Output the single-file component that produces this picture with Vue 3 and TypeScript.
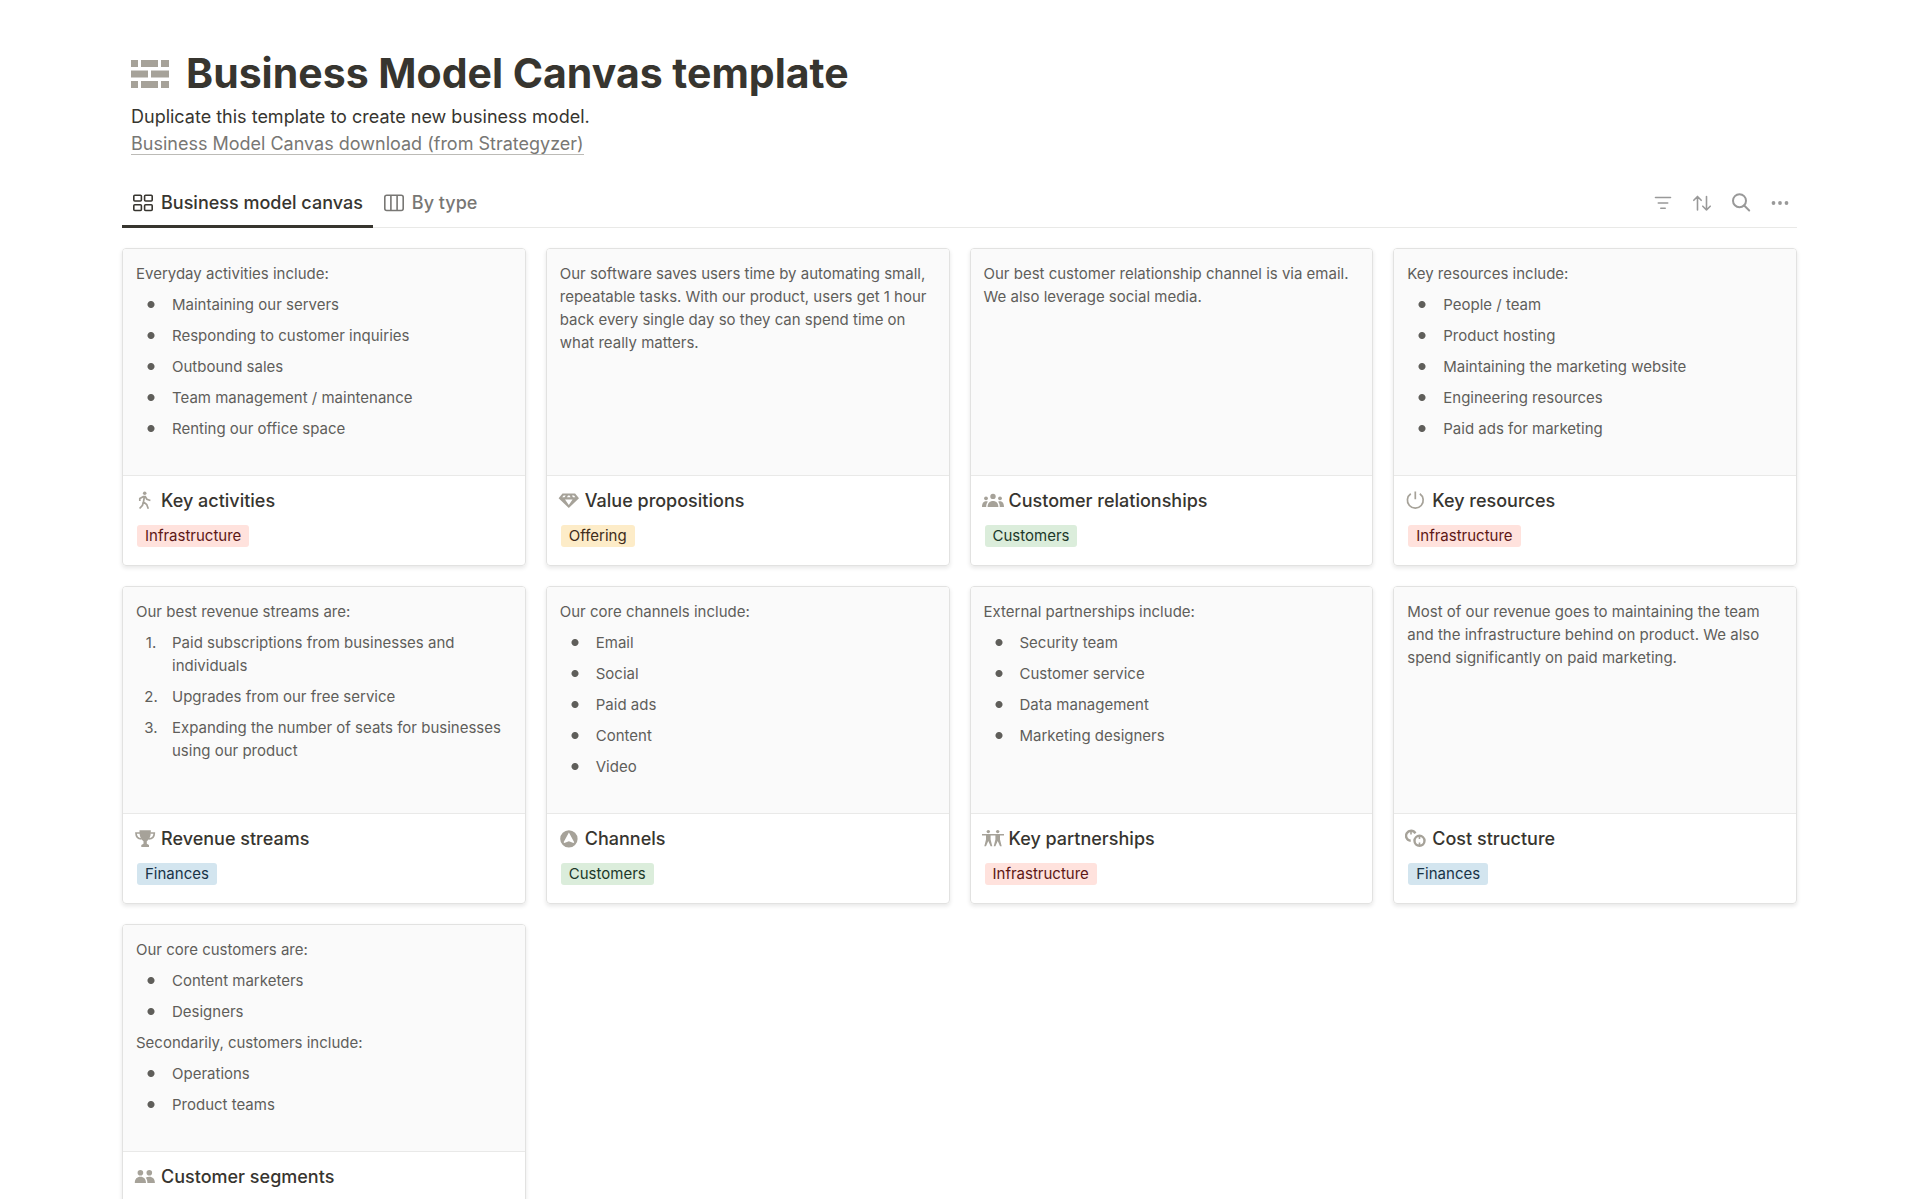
<script setup lang="ts">
import { ref } from 'vue'

type Tone = 'red' | 'yellow' | 'green' | 'blue'
type IconName =
  | 'walk' | 'gem' | 'group' | 'power' | 'trophy' | 'compass' | 'partners' | 'coins' | 'people'

interface Block {
  kind: 'text' | 'bullets' | 'numbers'
  text?: string
  items?: string[]
}

interface Card {
  title: string
  icon: IconName
  tag: string
  tone: Tone
  blocks: Block[]
}

const activeTab = ref('canvas')

const cards: Card[] = [
  {
    title: 'Key activities', icon: 'walk', tag: 'Infrastructure', tone: 'red',
    blocks: [
      { kind: 'text', text: 'Everyday activities include:' },
      { kind: 'bullets', items: ['Maintaining our servers', 'Responding to customer inquiries', 'Outbound sales', 'Team management / maintenance', 'Renting our office space'] },
    ],
  },
  {
    title: 'Value propositions', icon: 'gem', tag: 'Offering', tone: 'yellow',
    blocks: [
      { kind: 'text', text: 'Our software saves users time by automating small, repeatable tasks. With our product, users get 1 hour back every single day so they can spend time on what really matters.' },
    ],
  },
  {
    title: 'Customer relationships', icon: 'group', tag: 'Customers', tone: 'green',
    blocks: [
      { kind: 'text', text: 'Our best customer relationship channel is via email. We also leverage social media.' },
    ],
  },
  {
    title: 'Key resources', icon: 'power', tag: 'Infrastructure', tone: 'red',
    blocks: [
      { kind: 'text', text: 'Key resources include:' },
      { kind: 'bullets', items: ['People / team', 'Product hosting', 'Maintaining the marketing website', 'Engineering resources', 'Paid ads for marketing'] },
    ],
  },
  {
    title: 'Revenue streams', icon: 'trophy', tag: 'Finances', tone: 'blue',
    blocks: [
      { kind: 'text', text: 'Our best revenue streams are:' },
      { kind: 'numbers', items: ['Paid subscriptions from businesses and individuals', 'Upgrades from our free service', 'Expanding the number of seats for businesses using our product'] },
    ],
  },
  {
    title: 'Channels', icon: 'compass', tag: 'Customers', tone: 'green',
    blocks: [
      { kind: 'text', text: 'Our core channels include:' },
      { kind: 'bullets', items: ['Email', 'Social', 'Paid ads', 'Content', 'Video'] },
    ],
  },
  {
    title: 'Key partnerships', icon: 'partners', tag: 'Infrastructure', tone: 'red',
    blocks: [
      { kind: 'text', text: 'External partnerships include:' },
      { kind: 'bullets', items: ['Security team', 'Customer service', 'Data management', 'Marketing designers'] },
    ],
  },
  {
    title: 'Cost structure', icon: 'coins', tag: 'Finances', tone: 'blue',
    blocks: [
      { kind: 'text', text: 'Most of our revenue goes to maintaining the team and the infrastructure behind on product. We also spend significantly on paid marketing.' },
    ],
  },
  {
    title: 'Customer segments', icon: 'people', tag: 'Customers', tone: 'green',
    blocks: [
      { kind: 'text', text: 'Our core customers are:' },
      { kind: 'bullets', items: ['Content marketers', 'Designers'] },
      { kind: 'text', text: 'Secondarily, customers include:' },
      { kind: 'bullets', items: ['Operations', 'Product teams'] },
    ],
  },
]
</script>

<template>
  <main class="page">
    <header class="intro">
      <div class="heading">
        <svg class="brick" viewBox="0 0 38 28" aria-hidden="true">
          <path d="M0 0h7v7H0zM10 0h17v7H10zM30 0h8v7h-8zM0 10.500h17v7H0zM20 10.500h18v7H20zM0 21h7v7H0zM10 21h17v7H10zM30 21h8v7h-8z" />
        </svg>
        <h1>Business Model Canvas template</h1>
      </div>
      <p>Duplicate this template to create new business model.</p>
      <p><a href="#download">Business Model Canvas download (from Strategyzer)</a></p>
    </header>

    <nav class="bar">
      <div class="tabs">
        <button type="button" class="tab" :class="{ active: activeTab === 'canvas' }" @click="activeTab = 'canvas'">
          <svg viewBox="0 0 20 18" aria-hidden="true">
            <rect x="0.800" y="1.300" width="7.600" height="5.700" rx="1" /><rect x="11.600" y="1.300" width="7.600" height="5.700" rx="1" />
            <rect x="0.800" y="10.800" width="7.600" height="5.700" rx="1" /><rect x="11.600" y="10.800" width="7.600" height="5.700" rx="1" />
          </svg>
          <span>Business model canvas</span>
        </button>
        <button type="button" class="tab" :class="{ active: activeTab === 'type' }" @click="activeTab = 'type'">
          <svg viewBox="0 0 20 18" aria-hidden="true">
            <rect x="0.800" y="1.300" width="18.400" height="15.200" rx="2" /><path d="M6.900 1.300v15.200M13.100 1.300v15.200" />
          </svg>
          <span>By type</span>
        </button>
      </div>
      <div class="tools">
        <button type="button" aria-label="Filter">
          <svg viewBox="0 0 20 20"><path d="M2.500 4.500h15M5.300 10h9.400M7.800 15.200h4.400" /></svg>
        </button>
        <button type="button" aria-label="Sort">
          <svg viewBox="0 0 20 20"><path d="M5.500 17V3.500M1.800 7.300l3.700-3.800 3.700 3.800M14.500 3.500V17M10.800 13.200l3.700 3.800 3.700-3.800" /></svg>
        </button>
        <button type="button" aria-label="Search">
          <svg viewBox="0 0 20 20" class="thick"><circle cx="8.500" cy="7.700" r="6.500" /><path d="m13.200 12.500 5 5" /></svg>
        </button>
        <button type="button" aria-label="More options">
          <svg viewBox="0 0 20 20" class="dots"><circle cx="3.500" cy="10" r="1.900" /><circle cx="10" cy="10" r="1.900" /><circle cx="16.500" cy="10" r="1.900" /></svg>
        </button>
      </div>
    </nav>

    <section class="gallery">
      <article v-for="card in cards" :key="card.title" class="card">
        <div class="cover">
          <template v-for="(block, index) in card.blocks" :key="index">
            <p v-if="block.kind === 'text'">{{ block.text }}</p>
            <ul v-else-if="block.kind === 'bullets'">
              <li v-for="item in block.items" :key="item"><span>{{ item }}</span></li>
            </ul>
            <ol v-else>
              <li v-for="item in block.items" :key="item"><span>{{ item }}</span></li>
            </ol>
          </template>
        </div>
        <div class="info">
          <h2>
            <svg viewBox="0 0 22 22" aria-hidden="true">
              <template v-if="card.icon === 'walk'">
                <circle cx="10.700" cy="3.300" r="1.800" />
                <path class="line" d="M5.800 11V8.600L9.300 6.700h2l1.600 2.600 3.500 1.200M10.300 7 9.500 12l3.200 2.500 1.600 4.300M9.300 12.300l-.8 3L5.600 18.500" />
              </template>
              <template v-else-if="card.icon === 'gem'">
                <path fill-rule="evenodd" d="M4.500 3.500h12.600L21 8.300 10.800 18 .6 8.300zM5.600 5.400 4.200 7.300h2.400L7.700 5.400zM10 5.400 9 7.300h3.600l-1-1.900zM13.900 5.400 15 7.300h2.400L16 5.400zM7 9.500l3.800 5.500 3.800-5.500z" />
              </template>
              <template v-else-if="card.icon === 'group'">
                <circle cx="11" cy="6.400" r="2.700" /><circle cx="4" cy="8.300" r="1.900" /><circle cx="18" cy="8.300" r="1.900" />
                <path d="M5.600 17c0-4 2.300-6 5.400-6s5.400 2 5.400 6zM0 17c0-3.500 1.300-5.800 4-5.800.7 0 1.300.1 1.900.5C4.700 13 4.200 14.800 4.200 17zM22 17c0-3.500-1.300-5.800-4-5.800-.7 0-1.300.1-1.900.5 1.200 1.300 1.700 3.100 1.700 5.300z" />
              </template>
              <template v-else-if="card.icon === 'power'">
                <path class="line" d="M10.300 1.500v7.700M5.800 3.800a7.900 7.900 0 1 0 9 0" />
              </template>
              <template v-else-if="card.icon === 'trophy'">
                <path d="M5.500 2.300h11.300v2c0 4.600-1.600 7.400-4 8.900v2.600l2.200 1.200v1.900H7.300V17l2.200-1.200v-2.600c-2.400-1.500-4-4.300-4-8.900z" />
                <path class="line" d="M6 5H2C2 8.500 4 10.800 7.500 11M16.300 5h4c0 3.500-2 5.800-5.500 6" />
              </template>
              <template v-else-if="card.icon === 'compass'">
                <path fill-rule="evenodd" d="M10.900 2.200a8.700 8.700 0 1 0 0 17.400 8.700 8.700 0 0 0 0-17.400zM10.900 4.500 5.600 14.300l.7.800 4.600-1.800 4.600 1.800.7-.8z" />
              </template>
              <template v-else-if="card.icon === 'partners'">
                <circle cx="6.300" cy="3.600" r="1.700" /><circle cx="15.700" cy="3.600" r="1.700" />
                <path d="M0 6h22v1.500h-4v4l1.700 6.700h-1.700l-2.300-5.300-2.300 5.300h-1.700l1.700-6.700v-4H8.600v4l1.700 6.700H8.600l-2.300-5.300L4 18.200H2.300L4 11.500v-4H0z" />
              </template>
              <template v-else-if="card.icon === 'coins'">
                <circle class="ring" cx="14.500" cy="12.800" r="5" />
                <path class="ring" d="M10.400 5.300a5 5 0 1 0-4.700 7.500" />
                <path d="M5.200 2h1.600v4.500H5.200zM13.700 8h1.600v3h-1.600zM13.700 14.600h1.600v3h-1.600z" />
              </template>
              <template v-else>
                <circle cx="6.400" cy="6.700" r="2.800" /><circle cx="15.300" cy="6.700" r="2.800" />
                <path d="M.8 17c0-4 2.200-6.200 5.600-6.200S12 13 12 17zM13.400 17c0-2.200-.5-4-1.700-5.300 1-.6 2.200-.9 3.600-.9 3.400 0 5.600 2.200 5.600 6.200z" />
              </template>
            </svg>
            <span>{{ card.title }}</span>
          </h2>
          <span class="tag" :class="card.tone">{{ card.tag }}</span>
        </div>
      </article>
    </section>
  </main>
</template>

<style>
body {
  margin: 0;
  background: #fff;
}
</style>

<style scoped>
.page {
  box-sizing: border-box;
  padding: 48px 123px 40px 122px;
  color: #37352f;
  font-family: Inter, "Liberation Sans", sans-serif;
}

.intro {
  padding: 0 9px;
}

.heading {
  display: flex;
  align-items: flex-start;
  gap: 17px;
  height: 52px;
}

.brick {
  width: 38px;
  height: 28px;
  margin-top: 12px;
  fill: #a6a299;
}

h1,
h2,
p,
ul,
ol {
  margin: 0;
  padding: 0;
}

h1 {
  font-size: 41px;
  font-weight: 700;
  line-height: 50px;
}

.intro p {
  font-size: 18px;
  line-height: 27px;
}

.intro .heading + p {
  padding-top: 3px;
}

.intro a {
  color: #787774;
  text-decoration: none;
  border-bottom: 1px solid #bcbbb7;
}

.bar {
  display: flex;
  justify-content: space-between;
  margin-top: 22px;
  border-bottom: 1px solid #e9e9e7;
}

.tabs,
.tools {
  display: flex;
}

.tools {
  align-items: center;
  gap: 19px;
  padding-right: 7px;
}

button {
  display: flex;
  align-items: center;
  padding: 0;
  border: 0;
  background: none;
  font: inherit;
  cursor: pointer;
}

.tab {
  gap: 8px;
  height: 49px;
  margin-bottom: -1px;
  padding: 1px 10px 0 11px;
  color: #787774;
  font-size: 18px;
  font-weight: 500;
  line-height: 27px;
  border-bottom: 3px solid transparent;
}

.tab.active {
  color: #37352f;
  border-bottom-color: #37352f;
}

.tab svg {
  width: 20px;
  height: 18px;
  fill: none;
  stroke: currentColor;
  stroke-width: 1.6;
}

.tools svg {
  width: 20px;
  height: 20px;
  fill: none;
  stroke: #999;
  stroke-width: 1.6;
  stroke-linecap: round;
  stroke-linejoin: round;
}

.tools .thick {
  stroke-width: 2;
}

.tools .dots {
  fill: #999;
  stroke: none;
}

.gallery {
  display: grid;
  grid-template-columns: repeat(4, minmax(0, 1fr));
  gap: 20px;
  padding-top: 20px;
}

.card {
  display: flex;
  flex-direction: column;
  border: 1px solid #e2e2e1;
  border-radius: 4px;
  box-shadow: 0 2px 4px rgba(15, 15, 15, 0.1);
  overflow: hidden;
}

.cover {
  box-sizing: border-box;
  height: 227px;
  padding: 9px 13px;
  background: #fafafa;
  border-bottom: 1px solid #e9e9e8;
  color: #5f5e5a;
  font-size: 15px;
  line-height: 23px;
}

.cover p,
.cover li {
  padding: 4px 0;
}

.cover ul,
.cover ol {
  list-style: none;
  counter-reset: item;
}

.cover li {
  display: flex;
  gap: 6px;
  counter-increment: item;
}

.cover li::before {
  flex: none;
  width: 30px;
  text-align: center;
}

.cover ol li::before {
  content: counter(item) ".";
}

.cover ul li::before {
  content: "";
  height: 23px;
  background: radial-gradient(circle, #5f5e5a 3px, transparent 4px);
}

.info {
  display: flex;
  flex-direction: column;
  align-items: flex-start;
  gap: 13px;
  padding: 14px 12px 18px 11px;
}

h2 {
  display: flex;
  align-items: center;
  gap: 5px;
  font-size: 18px;
  font-weight: 500;
  line-height: 22px;
}

h2 svg {
  flex: none;
  width: 22px;
  height: 22px;
  fill: #a6a299;
}

.line {
  fill: none;
  stroke: #a6a299;
  stroke-width: 1.7;
}

.ring {
  fill: none;
  stroke: #a6a299;
  stroke-width: 2.4;
}

.tag {
  margin-left: 3px;
  padding: 0 8px;
  border-radius: 3px;
  font-size: 15px;
  line-height: 22px;
}

.red {
  background: #ffe2dd;
  color: #5d1715;
}

.yellow {
  background: #fdecc8;
  color: #402c1b;
}

.green {
  background: #dbeddb;
  color: #1c3829;
}

.blue {
  background: #d3e5ef;
  color: #183347;
}
</style>
